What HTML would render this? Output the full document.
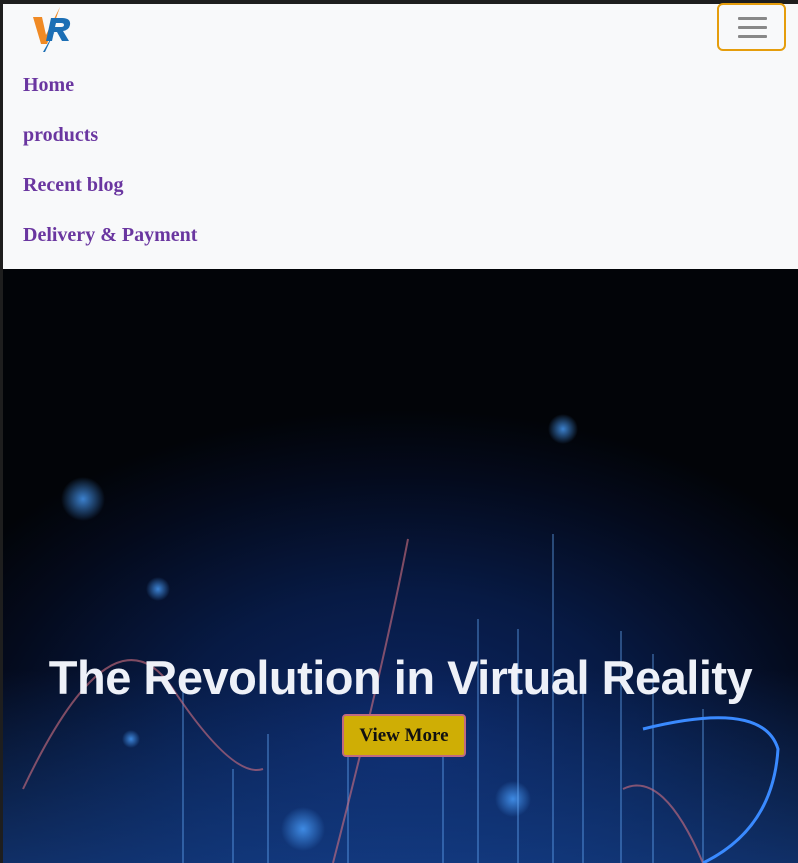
<!DOCTYPE html>
<html><head><style>
html,body{margin:0;padding:0;width:798px;height:863px;overflow:hidden;background:#1e1e1e;font-family:"Liberation Serif",serif}
.nav{position:absolute;left:3px;top:4px;width:795px;height:265px;background:#f8f9fa}
.nav a{position:absolute;left:20px;color:#6a36a0;font-weight:bold;font-size:20px;text-decoration:none}
.burger{position:absolute;left:714px;top:-1px;width:69px;height:48px;border:2px solid #e59d0c;border-radius:6px;box-sizing:border-box}
.burger i{position:absolute;left:19px;width:29px;height:3px;background:#888;border-radius:1px}
.hero{position:absolute;left:3px;top:269px;width:795px;height:594px;overflow:hidden;
background:radial-gradient(ellipse 520px 330px at 400px 470px,#0c2664 0%,#071a44 45%,#040a1c 80%,#020408 100%)}
h1{position:absolute;left:0;width:795px;top:381px;margin:0;text-align:center;color:#eef1f8;font-family:"Liberation Sans",sans-serif;font-weight:bold;font-size:47px;letter-spacing:-0.5px}
.btn{position:absolute;left:339px;top:445px;width:124px;height:43px;box-sizing:border-box;background:#cfae05;border:2px solid #c06a80;border-radius:4px;font-weight:bold;font-size:19px;text-align:center;line-height:39px;color:#111}
</style></head><body>
<div class="nav">
<svg style="position:absolute;left:28px;top:2px" width="44" height="46" viewBox="0 0 42 46">
<path d="M1 11 L10 11 L14 29 L28 1 L15 38 L9 38 Z" fill="#f08a24"/>
<path d="M19 12 L30 12 Q39 12 38 19 Q37 24 31 25 L37 35 L30 35 L25 26 L22 26 L20 35 L14 35 Z M24 17 L23 21 L29 21 Q32 21 32 19 Q32 17 29 17 Z" fill="#1c6fb5"/>
<path d="M23 25 L11 46 L13 46 Z" fill="#1c6fb5"/>
</svg>
<a style="top:70px">Home</a>
<a style="top:120px">products</a>
<a style="top:170px">Recent blog</a>
<a style="top:220px">Delivery &amp; Payment</a>
<div class="burger"><i style="top:12px"></i><i style="top:21px"></i><i style="top:30px"></i></div>
</div>
<div class="hero">
<svg width="795" height="594" style="position:absolute;left:0;top:0">
<defs><radialGradient id="g"><stop offset="0" stop-color="#4aa0ff" stop-opacity=".8"/><stop offset="1" stop-color="#4aa0ff" stop-opacity="0"/></radialGradient>
<linearGradient id="b" x1="0" y1="0" x2="0" y2="1"><stop offset="0" stop-color="#1a4fa0" stop-opacity="0"/><stop offset="1" stop-color="#1a4fa8" stop-opacity=".55"/></linearGradient></defs>
<rect x="0" y="400" width="795" height="194" fill="url(#b)"/>
<circle cx="80" cy="230" r="22" fill="url(#g)"/><circle cx="560" cy="160" r="15" fill="url(#g)"/>
<circle cx="155" cy="320" r="12" fill="url(#g)"/><circle cx="128" cy="470" r="9" fill="url(#g)"/>
<circle cx="510" cy="530" r="18" fill="url(#g)"/><circle cx="300" cy="560" r="22" fill="url(#g)"/>
<g stroke="#6ab0ff" stroke-width="1.2" opacity=".6">
<line x1="550" y1="265" x2="550" y2="594"/><line x1="475" y1="350" x2="475" y2="594"/><line x1="515" y1="360" x2="515" y2="594"/>
<line x1="618" y1="362" x2="618" y2="594"/><line x1="650" y1="385" x2="650" y2="594"/><line x1="180" y1="410" x2="180" y2="594"/>
<line x1="265" y1="465" x2="265" y2="594"/><line x1="440" y1="480" x2="440" y2="594"/><line x1="580" y1="420" x2="580" y2="594"/>
<line x1="700" y1="440" x2="700" y2="594"/><line x1="345" y1="480" x2="345" y2="594"/><line x1="230" y1="500" x2="230" y2="594"/></g>
<g fill="none" stroke="#d07080" stroke-width="2" opacity=".6">
<path d="M20 520 Q110 330 170 420 T260 500"/><path d="M405 270 Q380 400 330 594"/><path d="M620 520 Q660 500 700 594"/></g>
<path d="M640 460 Q760 430 775 480 Q770 560 700 594" fill="none" stroke="#3a8aff" stroke-width="3"/>
</svg>
<h1>The Revolution in Virtual Reality</h1>
<div class="btn">View More</div>
</div>
</body></html>
